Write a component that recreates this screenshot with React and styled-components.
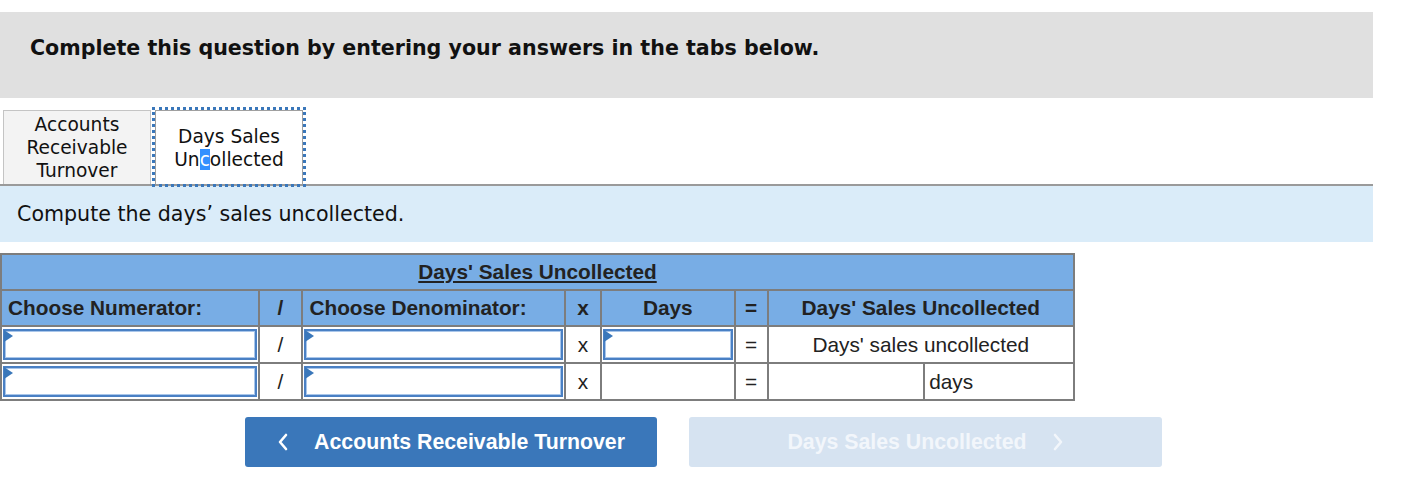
import React from "react";
import { styled, createGlobalStyle } from "styled-components";

const Global = createGlobalStyle`
  body {
    margin: 0;
    background: #ffffff;
    font-family: "DejaVu Sans", Verdana, sans-serif;
    color: #111;
  }
`;

const Page = styled.div`
  width: 1373px;
  padding-top: 12px;
`;

const Banner = styled.div`
  height: 86px;
  box-sizing: border-box;
  background: #e0e0e0;
  padding: 24px 0 0 30px;
  font-weight: bold;
  font-size: 20.6px;
  line-height: 24px;
`;

const TabBar = styled.div`
  display: flex;
  align-items: flex-end;
  margin-top: 12px;
  padding-left: 3px;
  border-bottom: 2px solid #9a9a9a;
`;

const Tab = styled.div`
  width: ${(p) => p.$w}px;
  height: 74px;
  box-sizing: border-box;
  display: flex;
  align-items: center;
  justify-content: center;
  text-align: center;
  font-size: 18.6px;
  line-height: 23px;
  color: #111;
  background: ${(p) => (p.$active ? "#ffffff" : "#f3f3f3")};
  border: 1px solid #c4c4c4;
  border-bottom: none;
  ${(p) =>
    p.$active &&
    `
    margin-left: 4px;
    border-color: #a0a0a0;
    outline: 3px dotted #3a77ba;
    outline-offset: 0px;
  `}
`;

const Sel = styled.span`
  background: #3390ff;
  color: #fff;
`;

const Prompt = styled.div`
  height: 56px;
  background: #daecf9;
  display: flex;
  align-items: center;
  padding-left: 17px;
  font-size: 20.6px;
`;

const Table = styled.table`
  margin-top: 11px;
  border-collapse: collapse;
  width: 1075px;
  font-family: "Liberation Sans", Arial, sans-serif;
  font-size: 20.8px;
  color: #222;
  td {
    border: 2px solid #7d7d7d;
    padding: 0;
  }
`;

const TitleCell = styled.td`
  height: 34px;
  background: #78ade5;
  text-align: center;
  font-weight: bold;
  text-decoration: underline;
  text-underline-offset: 2px;
`;

const HeadCell = styled.td`
  height: 34px;
  background: #78ade5;
  font-weight: bold;
  text-align: ${(p) => p.$align || "center"};
  padding-left: ${(p) => (p.$align === "left" ? "6px" : "0")} !important;
`;

const Cell = styled.td`
  height: 33px;
  background: #fff;
  text-align: ${(p) => p.$align || "center"};
  padding-left: ${(p) => (p.$align === "left" ? "4px" : "0")} !important;
`;

const InputCell = styled.td`
  height: 33px;
  background: #fff;
  padding: 1px !important;
`;

const Field = styled.div`
  position: relative;
  height: 31px;
  box-sizing: border-box;
  border: 2px solid #4a80c4;
  box-shadow: inset 0 0 0 1px #a9c6ea;
  background: #fff;
  &::before {
    content: "";
    position: absolute;
    left: -1px;
    top: -1px;
    border-top: 6px solid transparent;
    border-bottom: 6px solid transparent;
    border-left: 9px solid #3a77ba;
  }
`;

const Buttons = styled.div`
  display: flex;
  gap: 32px;
  margin-top: 16px;
  padding-left: 245px;
`;

const NavButton = styled.button`
  width: ${(p) => p.$w}px;
  height: 50px;
  border: none;
  border-radius: 3px;
  background: ${(p) => (p.$disabled ? "#d6e3f1" : "#3a77ba")};
  color: ${(p) => (p.$disabled ? "#f2f6fb" : "#ffffff")};
  font-family: "Liberation Sans", Arial, sans-serif;
  font-weight: bold;
  font-size: 21.3px;
  display: flex;
  align-items: center;
  justify-content: center;
  gap: 25px;
  cursor: ${(p) => (p.$disabled ? "default" : "pointer")};
`;

const Chevron = ({ dir }) => (
  <svg width="12" height="18" viewBox="0 0 12 18">
    <path
      d={dir === "left" ? "M9 2 L3 9 L9 16" : "M3 2 L9 9 L3 16"}
      fill="none"
      stroke="currentColor"
      strokeWidth="2.6"
      strokeLinecap="round"
      strokeLinejoin="round"
    />
  </svg>
);

export default function App() {
  return (
    <Page>
      <Global />
      <Banner>Complete this question by entering your answers in the tabs below.</Banner>
      <TabBar>
        <Tab $w={148}>
          Accounts
          <br />
          Receivable
          <br />
          Turnover
        </Tab>
        <Tab $w={148} $active>
          <span>
            Days Sales
            <br />
            Un<Sel>c</Sel>ollected
          </span>
        </Tab>
      </TabBar>
      <Prompt>Compute the days’ sales uncollected.</Prompt>
      <Table>
        <colgroup>
          <col style={{ width: 258 }} />
          <col style={{ width: 44 }} />
          <col style={{ width: 263 }} />
          <col style={{ width: 36 }} />
          <col style={{ width: 134 }} />
          <col style={{ width: 33 }} />
          <col style={{ width: 157 }} />
          <col style={{ width: 150 }} />
        </colgroup>
        <tbody>
          <tr>
            <TitleCell colSpan={8}>Days' Sales Uncollected</TitleCell>
          </tr>
          <tr>
            <HeadCell $align="left">Choose Numerator:</HeadCell>
            <HeadCell>/</HeadCell>
            <HeadCell $align="left">Choose Denominator:</HeadCell>
            <HeadCell>x</HeadCell>
            <HeadCell>Days</HeadCell>
            <HeadCell>=</HeadCell>
            <HeadCell colSpan={2}>Days' Sales Uncollected</HeadCell>
          </tr>
          <tr>
            <InputCell><Field /></InputCell>
            <Cell>/</Cell>
            <InputCell><Field /></InputCell>
            <Cell>x</Cell>
            <InputCell><Field /></InputCell>
            <Cell>=</Cell>
            <Cell colSpan={2}>Days' sales uncollected</Cell>
          </tr>
          <tr>
            <InputCell><Field /></InputCell>
            <Cell>/</Cell>
            <InputCell><Field /></InputCell>
            <Cell>x</Cell>
            <Cell />
            <Cell>=</Cell>
            <Cell />
            <Cell $align="left">days</Cell>
          </tr>
        </tbody>
      </Table>
      <Buttons>
        <NavButton $w={412}>
          <Chevron dir="left" />
          Accounts Receivable Turnover
        </NavButton>
        <NavButton $w={473} $disabled>
          Days Sales Uncollected
          <Chevron dir="right" />
        </NavButton>
      </Buttons>
    </Page>
  );
}
